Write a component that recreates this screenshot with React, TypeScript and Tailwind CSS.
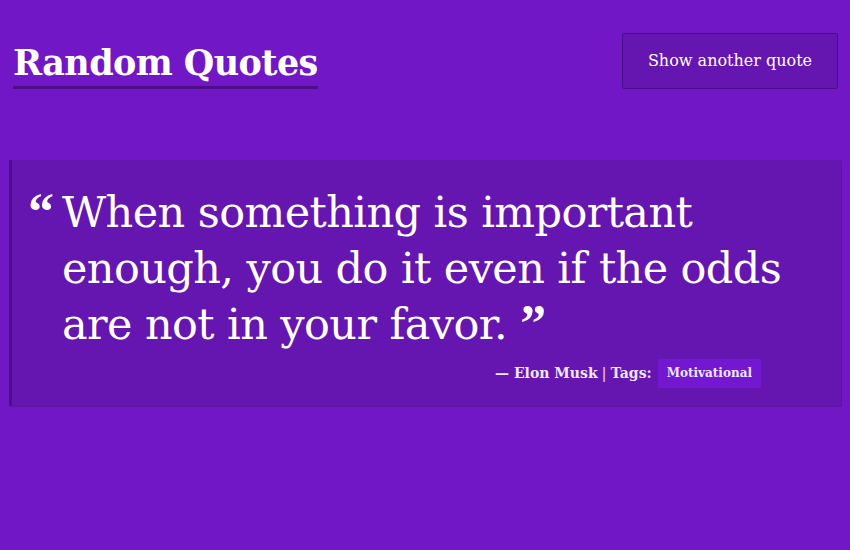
export default function App() {
  return (
    <div
      className="min-h-[550px] w-full bg-[#7217c6] text-white px-[9px] pt-[33px]"
      style={{ fontFamily: '"DejaVu Serif", "Liberation Serif", serif' }}
    >
      <header className="flex items-start justify-between pl-[4px] pr-[3px]">
        <h1 className="mt-[9px] text-[35px] font-bold leading-[42px] tracking-[-0.6px] border-b-[3px] border-[#4d0e8c] pb-[2px]">
          Random Quotes
        </h1>
        <button className="h-[56px] w-[216px] bg-[#6516b0] border border-[#4a0f88] rounded-[2px] text-[16px] text-white">
          Show another quote
        </button>
      </header>

      <section className="mt-[71px] bg-[#6516b0] border-l-[3px] border-[#4d0e8c] shadow-[1px_1px_0_#5d14a2] pt-[24px] pb-[18px] pl-[16px] pr-[8px]">
        <blockquote className="flex">
          <span
            className="text-[52px] font-bold leading-[60px] w-[34px] shrink-0 -mt-[2px]"
            style={{ fontFamily: '"Liberation Serif", serif' }}
          >
            “
          </span>
          <p className="text-[43px] leading-[56px] tracking-[-0.6px]">
            When something is important enough, you do it even if the odds are not in your favor.{" "}
            <span
              className="inline-block font-bold text-[52px] leading-[30px] align-[-2px]"
              style={{ fontFamily: '"Liberation Serif", serif' }}
            >
              ”
            </span>
          </p>
        </blockquote>
        <div className="flex items-center justify-end mt-[7px] pr-[72px] text-[14px] font-bold">
          <span className="text-[#efe6ff]">— Elon Musk</span>
          <span className="mx-[4px] text-[#e9b7b7]">|</span>
          <span className="text-[#efe6ff]">Tags:</span>
          <span className="ml-[6px] bg-[#7318d0] px-[9px] py-[6px] text-[12px] leading-[17px] text-[#efe6ff]">
            Motivational
          </span>
        </div>
      </section>
    </div>
  );
}
